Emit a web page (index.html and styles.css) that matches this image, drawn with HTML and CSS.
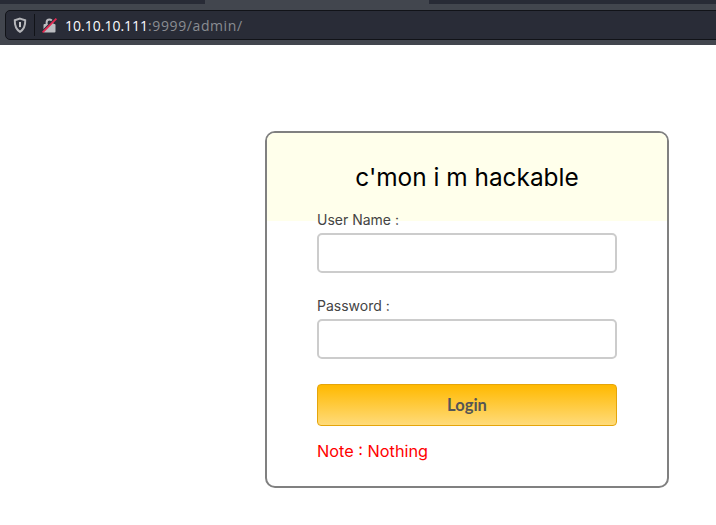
FILE: index.html
```html
<!DOCTYPE html>
<html lang="en">
<head>
    <meta charset="UTF-8">
    <title>c'mon i m hackable</title>
    <link rel="stylesheet" href="styles.css">
</head>
<body>
    <div class="tabstrip">
        <div class="tab-side"></div>
        <div class="tab-active"></div>
        <div class="tab-side tab-rest"></div>
    </div>
    <div class="toolbar">
        <div class="urlbar">
            <svg class="shield" width="14" height="16" viewBox="0 0 14 16">
                <path d="M7 1.6 L12.2 3.2 C12.4 8.5 10.5 12.6 7 14.8 C3.5 12.6 1.6 8.5 1.8 3.2 Z" fill="none" stroke="#b4b5b9" stroke-width="2"/>
                <path d="M6.1 5 H7.9 V9.5 L7 10.4 L6.1 9.5 Z" fill="#d6d7d9"/>
            </svg>
            <span class="sep"></span>
            <svg class="lock" width="16" height="16" viewBox="0 0 16 16">
                <path d="M4.6 8 V5.6 C4.6 1.4 10.4 1.4 10.4 5.6 V8" fill="none" stroke="#bcbdc1" stroke-width="2"/>
                <rect x="1.5" y="7" width="12" height="8.4" rx="1" fill="#bcbdc1"/>
                <path d="M1 13.5 L14 0.5" stroke="#292c37" stroke-width="1.6"/>
                <path d="M0.6 15.4 L14.4 1.6" stroke="#e22850" stroke-width="1.8"/>
            </svg>
            <span class="url"><span class="host">10.10.10.111</span>:9999/admin/</span>
        </div>
    </div>
    <main class="page">
        <form class="card">
            <div class="card-head">c'mon i m hackable</div>
            <div class="fields">
                <label class="field-label">User Name :</label>
                <input class="field-input" type="text">
                <label class="field-label pass-label">Password :</label>
                <input class="field-input" type="password">
                <button class="login" type="button">Login</button>
                <p class="note">Note : Nothing</p>
            </div>
        </form>
    </main>
</body>
</html>
```

FILE: styles.css
```css
* {
    margin: 0;
    padding: 0;
    box-sizing: border-box;
}
body {
    background: #fff;
    font-family: Inter, sans-serif;
    overflow: hidden;
}
.tabstrip {
    display: flex;
    height: 4px;
}
.tab-side {
    width: 205px;
    background: #282b36;
}
.tab-rest {
    flex: 1;
}
.tab-active {
    width: 224px;
    background: #42464e;
}
.toolbar {
    height: 41px;
    padding: 6px 0 5px 5px;
    background: #42464e;
}
.urlbar {
    display: flex;
    align-items: center;
    height: 30px;
    margin-right: -5px;
    border: 1px solid #111318;
    border-radius: 5px;
    background: #292c37;
}
.shield {
    margin-left: 7px;
}
.sep {
    width: 1px;
    height: 22px;
    margin: 0 7px;
    background: #111318;
}
.url {
    margin-left: 7px;
    font-family: "Open Sans", sans-serif;
    font-size: 14px;
    letter-spacing: 0.6px;
    color: #8a8c92;
}
.host {
    letter-spacing: 0;
    color: #fbfbfe;
}
.page {
    padding: 86px 0 0 265px;
}
.card {
    width: 404px;
    height: 357px;
    border: 2px solid #808080;
    border-radius: 10px;
    overflow: hidden;
}
.card-head {
    height: 88px;
    padding-top: 28px;
    background: #ffffeb;
    font-size: 24.4px;
    line-height: 32px;
    text-align: center;
    color: #000;
}
.fields {
    display: flex;
    flex-direction: column;
    padding: 0 50px;
    margin-top: -11px;
}
.field-label {
    font-size: 14px;
    line-height: 20px;
    color: #444;
}
.pass-label {
    margin-top: 23px;
}
.field-input {
    height: 40px;
    margin-top: 3px;
    border: 2px solid #ccc;
    border-radius: 5px;
    background: #fff;
}
.login {
    height: 42px;
    margin-top: 25px;
    border: 1px solid #e5a50a;
    border-radius: 4px;
    background: linear-gradient(#ffb900, #ffdb7a);
    font-family: Lato, sans-serif;
    font-size: 16.5px;
    font-weight: 700;
    color: #555;
}
.note {
    margin-top: 13px;
    font-size: 16.3px;
    line-height: 24px;
    color: #f00;
}
```
